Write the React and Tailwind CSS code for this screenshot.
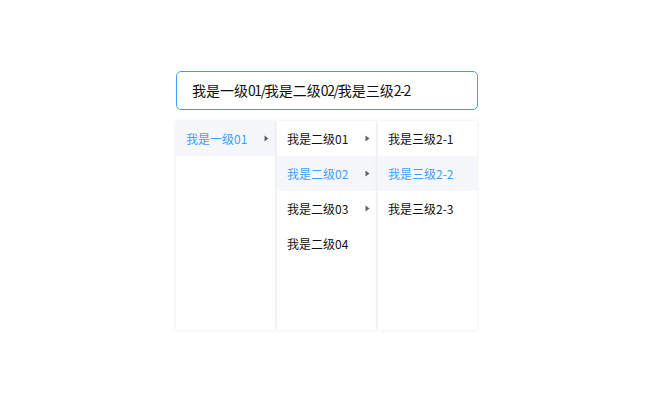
import React from "react";

const font = { fontFamily: '"Noto Sans CJK SC", "Noto Sans", sans-serif' };

function Arrow() {
  return (
    <svg width="5" height="7" viewBox="0 0 5 7" className="shrink-0">
      <path d="M0.5 0.5 L4.5 3.5 L0.5 6.5 Z" fill="#606266" />
    </svg>
  );
}

function Row({ label, active, arrow }) {
  return (
    <div
      className={`h-[35px] flex items-center justify-between pl-[10px] pr-[6px] text-[12px] ${
        active ? "bg-[#f5f7fa] text-[#409eff]" : "text-[#111]"
      }`}
    >
      <span>{label}</span>
      {arrow && <Arrow />}
    </div>
  );
}

function Col({ children }) {
  return (
    <div className="w-[99px] h-[209px] bg-white shadow-[0_0_4px_rgba(0,0,0,0.09)]">
      {children}
    </div>
  );
}

function N({ children }) {
  return <span className="tracking-[-1.4px]">{children}</span>;
}

export default function App() {
  return (
    <div className="w-[650px] h-[410px] bg-white pt-[71px] pl-[176px]" style={font}>
      <div className="w-[302px] h-[39px] border border-[#409eff] rounded-[5px] pl-[15px] flex items-center text-[14px] text-[#111]">
        <span>
          我是一级<N>01/</N>我是二级<N>02/</N>我是三级<N>2-2</N>
        </span>
      </div>
      <div className="mt-[11px] flex gap-[2px]">
        <Col>
          <Row label="我是一级01" active arrow />
        </Col>
        <Col>
          <Row label="我是二级01" arrow />
          <Row label="我是二级02" active arrow />
          <Row label="我是二级03" arrow />
          <Row label="我是二级04" />
        </Col>
        <Col>
          <Row label="我是三级2-1" />
          <Row label="我是三级2-2" active />
          <Row label="我是三级2-3" />
        </Col>
      </div>
    </div>
  );
}
